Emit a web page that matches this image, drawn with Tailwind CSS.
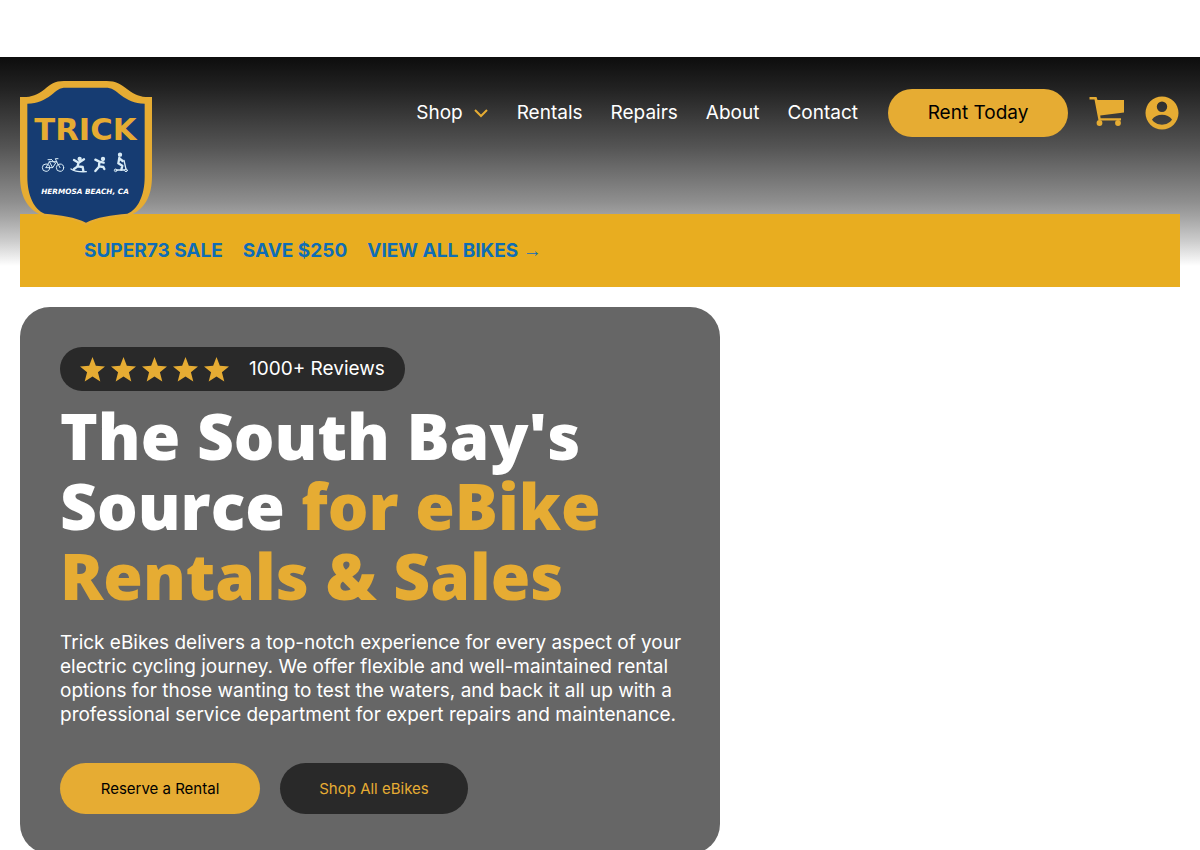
<!DOCTYPE html>
<html lang="en">
<head>
    <meta charset="UTF-8">
    <meta name="viewport" content="width=device-width, initial-scale=1.0">
    <script src="https://cdn.jsdelivr.net/npm/@tailwindcss/browser@4"></script>
    <title>Trick eBikes</title>
</head>
<body class="bg-white pt-14 font-['Inter',sans-serif] text-[19px] leading-6">
    <div class="mt-px px-5 bg-no-repeat bg-[length:100%_209px] bg-[linear-gradient(to_bottom,#0d0d0d_0%,#222222_15%,#545454_43%,#8e8e8e_69%,#a2a2a2_76%,#cccccc_88%,#ffffff_100%)]">
        <header class="flex justify-between items-start pt-6 h-[157px]">
            <a href="#" class="relative z-10" aria-label="Trick eBikes home">
                <svg class="w-[132px] h-[145px]" viewBox="0 0 396 435">
                    <path fill="#e6ac33" d="M0 48C32 50 50 42 72 26C92 10 104 0 132 0H260C288 0 302 10 324 26C346 42 364 50 396 48V286C396 345 374 388 326 404C276 407 232 412 198 434C164 412 120 407 70 404C22 388 0 345 0 286Z"/>
                    <path fill="#163c72" d="M22 68C54 67 72 58 94 42C110 28 118 20 138 20H256C276 20 286 28 302 42C324 58 342 67 374 68V288C374 342 354 386 322 398C274 402 230 408 198 425C166 408 122 402 74 398C42 386 22 342 22 288Z"/>
                    <text x="196" y="178" text-anchor="middle" fill="#e6ac33" class="font-['DejaVu_Sans',sans-serif] font-bold text-[92px]">TRICK</text>
                    <g fill="none" stroke="#d9ecf7" stroke-width="3" stroke-linecap="round" stroke-linejoin="round">
                        <circle cx="78" cy="260" r="11"/>
                        <circle cx="120" cy="260" r="11"/>
                        <path d="M78 260L88 242H110L98 260H78M88 242L98 260M84 236H92M110 242L106 233H114M110 242L120 260M94 235L104 246"/>
                    </g>
                    <g fill="none" stroke="#d9ecf7" stroke-width="7" stroke-linecap="round" stroke-linejoin="round">
                        <circle cx="179" cy="234" r="3"/>
                        <path d="M162 237L176 245L192 235M176 245L172 257L162 264M174 256L188 258L190 269"/>
                        <path stroke-width="4" d="M153 264C164 272 180 273 199 272"/>
                        <circle cx="249" cy="234" r="3"/>
                        <path d="M226 236L238 242L251 245M238 242L237 257L226 270M237 256L250 258L253 264"/>
                        <circle cx="300" cy="221" r="3"/>
                        <path d="M298 230L295 247L307 254L304 266M298 232L308 240"/>
                        <path stroke-width="4" d="M312 238L318 265M288 267H314"/>
                        <circle cx="287" cy="268" r="4" stroke-width="3"/>
                        <circle cx="318" cy="268" r="4" stroke-width="3"/>
                    </g>
                    <text x="195" y="339" text-anchor="middle" fill="#ffffff" class="font-['DejaVu_Sans',sans-serif] font-bold italic text-[22px]">HERMOSA BEACH, CA</text>
                </svg>
            </a>
            <div class="flex items-center gap-5 pt-2">
                <nav class="flex items-center gap-7 pr-2.5 text-white">
                    <a href="#" class="flex items-center gap-2.5">
                        Shop
                        <svg class="w-4 h-4" viewBox="0 0 16 16" fill="none" stroke="#e6ac33" stroke-width="2">
                            <path d="M2 5L8 11L14 5"/>
                        </svg>
                    </a>
                    <a href="#">Rentals</a>
                    <a href="#">Repairs</a>
                    <a href="#">About</a>
                    <a href="#">Contact</a>
                </nav>
                <a href="#" class="flex items-center justify-center w-[180px] h-12 rounded-full bg-[#e6ac33] text-black">Rent Today</a>
                <a href="#" aria-label="Cart">
                    <svg class="w-9 h-9" viewBox="0 0 36 36" fill="#e6ac33">
                        <path d="M1.500 2H8.500L9.500 5H36V17.500L12.200 20.500L12.600 23.200H33V25.500H10.500L6.500 4.500H1.500Z"/>
                        <circle cx="11.500" cy="28" r="2.900"/>
                        <circle cx="30" cy="28" r="2.900"/>
                    </svg>
                </a>
                <a href="#" aria-label="Account">
                    <svg class="w-9 h-9" viewBox="0 0 36 36">
                        <path fill="#e6ac33" fill-rule="evenodd" d="M18 1.500A16.500 16.500 0 1 1 18 34.500A16.500 16.500 0 1 1 18 1.500ZM18 6.500A5.200 5.200 0 1 0 18 16.900A5.200 5.200 0 1 0 18 6.500ZM8 24.600C10 27.800 14 29.800 18 29.800S26 27.800 28 24.600C26 21.500 22 19.700 18 19.700S10 21.500 8 24.600Z"/>
                    </svg>
                </a>
            </div>
        </header>
        <div class="flex items-center gap-5 h-[73px] px-16 bg-[#e8ad20] font-bold text-[#0f6db5]">
            <a href="#">SUPER73 SALE</a>
            <a href="#">SAVE $250</a>
            <a href="#">VIEW ALL BIKES <span class="font-['Liberation_Sans',sans-serif] font-normal">→</span></a>
        </div>
    </div>

    <main class="px-5 pt-5">
        <section class="max-w-[700px] p-10 rounded-[30px] bg-[#666666] text-white">
            <div class="inline-flex items-center gap-5 h-11 px-5 rounded-full bg-[#292929]">
                <div class="flex gap-1.5 text-[#e6ac33]">
                    <svg class="w-[25px] h-[25px]" viewBox="0 0 24 24" fill="currentColor"><path d="M12 0L15.200 8.500L24 9L17.200 14.700L19.500 23.500L12 18.600L4.500 23.500L6.800 14.700L0 9L8.800 8.500Z"/></svg>
                    <svg class="w-[25px] h-[25px]" viewBox="0 0 24 24" fill="currentColor"><path d="M12 0L15.200 8.500L24 9L17.200 14.700L19.500 23.500L12 18.600L4.500 23.500L6.800 14.700L0 9L8.800 8.500Z"/></svg>
                    <svg class="w-[25px] h-[25px]" viewBox="0 0 24 24" fill="currentColor"><path d="M12 0L15.200 8.500L24 9L17.200 14.700L19.500 23.500L12 18.600L4.500 23.500L6.800 14.700L0 9L8.800 8.500Z"/></svg>
                    <svg class="w-[25px] h-[25px]" viewBox="0 0 24 24" fill="currentColor"><path d="M12 0L15.200 8.500L24 9L17.200 14.700L19.500 23.500L12 18.600L4.500 23.500L6.800 14.700L0 9L8.800 8.500Z"/></svg>
                    <svg class="w-[25px] h-[25px]" viewBox="0 0 24 24" fill="currentColor"><path d="M12 0L15.200 8.500L24 9L17.200 14.700L19.500 23.500L12 18.600L4.500 23.500L6.800 14.700L0 9L8.800 8.500Z"/></svg>
                </div>
                <span>1000+ Reviews</span>
            </div>
            <h1 class="mt-2.5 font-['Open_Sans',sans-serif] font-extrabold text-[64px] leading-[70px]">
                The South Bay's<br>Source <span class="text-[#e6ac33]">for eBike<br>Rentals &amp; Sales</span>
            </h1>
            <p class="mt-5 sm:whitespace-nowrap">
                Trick eBikes delivers a top-notch experience for every aspect of your<br>
                electric cycling journey. We offer flexible and well-maintained rental<br>
                options for those wanting to test the waters, and back it all up with a<br>
                professional service department for expert repairs and maintenance.
            </p>
            <div class="flex gap-5 mt-9 text-[15px]">
                <a href="#" class="flex items-center justify-center h-[51px] w-[200px] rounded-full bg-[#e6ac33] text-black">Reserve a Rental</a>
                <a href="#" class="flex items-center justify-center h-[51px] w-[188px] rounded-full bg-[#292929] text-[#e6ac33]">Shop All eBikes</a>
            </div>
        </section>
    </main>
</body>
</html>
